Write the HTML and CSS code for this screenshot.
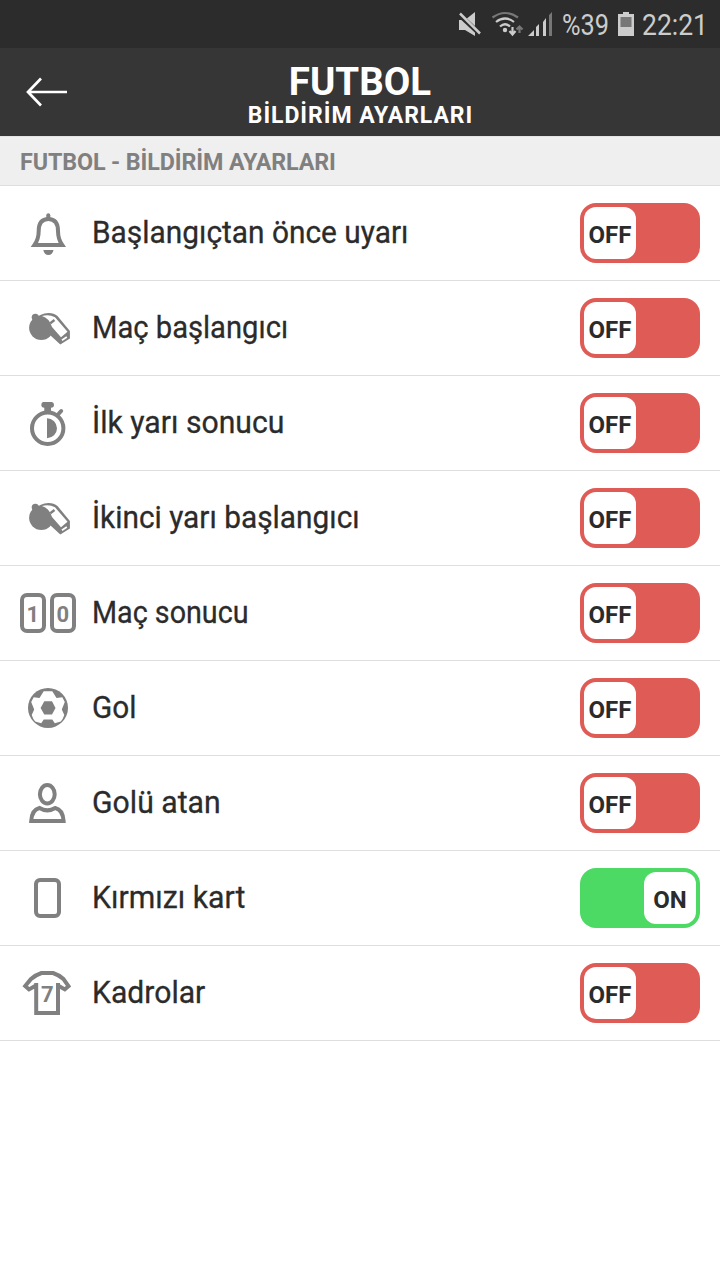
FILE: index.html
```html
<!DOCTYPE html>
<html lang="tr">
<head>
<meta charset="utf-8">
<title>Futbol - Bildirim Ayarları</title>
<link rel="stylesheet" href="styles.css">
</head>
<body>
<svg class="defs" width="0" height="0">
  <symbol id="whistle" viewBox="0 0 60 60">
    <circle cx="17.300" cy="19.300" r="3.600"/>
    <path d="M17 22Q22 15 30.500 15Q36 15 39.500 18L51.900 33V40.500L42.300 46.600L32 37L20 28Z"/>
    <circle cx="23.300" cy="29.800" r="12.200"/>
    <path class="paper" d="M24 18.100Q31 16 37 19.300L49.500 33.700L43 39.300L34 29Q31 20 24 18.100Z"/>
    <path d="M32.300 25.200L36.500 22" stroke="#808080" stroke-width="2.400"/>
    <path d="M44 42.200L48.800 39" stroke="#fff" stroke-width="1.700"/>
  </symbol>
</svg>
<header class="status">
  <svg width="260" height="48" viewBox="460 0 260 48">
    <g fill="#ccc">
      <path d="M459 20H465L475 12V36L465 30H459Z"/>
      <path d="M458.500 14L480 34" stroke="#2b2c2b" stroke-width="5"/>
      <path d="M460 13.500L480 33.500" stroke="#ccc" stroke-width="2.500"/>
      <circle cx="505" cy="30" r="2.200"/>
      <path d="M528 36L534 30V36ZM536 27L539 24V36H536ZM543 22L546 18V36H543Z"/>
      <path d="M618 14H623V12H629V14H634V36H618Z"/>
    </g>
    <g fill="none" stroke="#ccc" stroke-width="2.200">
      <path d="M496 22Q505 15 514 22M500 26.500Q505 22 510 26.500M512.500 27V34M509.500 31L512.500 34.500L515.500 31"/>
      <path stroke="#777" d="M492.500 17.500Q505 8.500 518 17.500M519.500 33V27M516.500 29.500L519.500 26.500L522.500 29.500"/>
    </g>
    <path fill="#777" d="M549 15L552 12V36H549ZM620.500 17H631.500V27H620.500Z"/>
    <text class="status-text" x="562" y="34.700" textLength="47" lengthAdjust="spacingAndGlyphs">%39</text>
    <text class="status-text" x="642" y="34.700" textLength="66" lengthAdjust="spacingAndGlyphs">22:21</text>
  </svg>
</header>
<nav class="topbar">
  <svg class="back" width="44" height="32" viewBox="0 0 44 32"><path d="M16 2.500L3 16L16 29.500M3 16H42" fill="none" stroke="#fff" stroke-width="2.700"/></svg>
  <div class="heading">
    <h1 class="title">FUTBOL</h1>
    <p class="subtitle">BİLDİRİM AYARLARI</p>
  </div>
</nav>
<h2 class="section"><span class="section-text">FUTBOL - BİLDİRİM AYARLARI</span></h2>
<main class="list">
  <div class="row">
    <svg class="icon" viewBox="0 0 60 60"><path d="M16.500 42C20 37 20.700 34 20.700 28C20.700 19.500 24 16 30.300 16C36.600 16 40 19.500 40 28C40 34 40.700 37 44.200 42Z" class="line"/><path class="line" stroke-linecap="round" d="M30.300 12.200V16"/><path d="M25.300 47H35.500Q34.500 52 30.400 52Q26.300 52 25.300 47Z"/></svg>
    <span class="label l1">Başlangıçtan önce uyarı</span><span class="toggle"><b class="knob">OFF</b></span>
  </div>
  <div class="row">
    <svg class="icon"><use href="#whistle"/></svg>
    <span class="label l2">Maç başlangıcı</span><span class="toggle"><b class="knob">OFF</b></span>
  </div>
  <div class="row">
    <svg class="icon" viewBox="0 0 60 60"><circle cx="29.700" cy="35.200" r="15.700" class="line"/><path d="M29 25.200A10 10 0 0 1 29 45.200ZM25 9H34Q36 9.500 36 12Q36 14.500 33 14.700V20H26.300V14.700Q23.300 14.500 23.300 12Q23.300 9.500 25 9Z"/><path class="line" stroke-linecap="round" d="M39.500 22L43.200 18"/></svg>
    <span class="label l3">İlk yarı sonucu</span><span class="toggle"><b class="knob">OFF</b></span>
  </div>
  <div class="row">
    <svg class="icon"><use href="#whistle"/></svg>
    <span class="label l4">İkinci yarı başlangıcı</span><span class="toggle"><b class="knob">OFF</b></span>
  </div>
  <div class="row">
    <svg class="icon" viewBox="0 0 60 60"><rect class="line" x="4" y="12" width="22" height="36" rx="5"/><rect class="line" x="34" y="12" width="22" height="36" rx="5"/><text class="digit" x="14.700" y="38.700">1</text><text class="digit" x="44.700" y="38.700">0</text></svg>
    <span class="label l5">Maç sonucu</span><span class="toggle"><b class="knob">OFF</b></span>
  </div>
  <div class="row">
    <svg class="icon" viewBox="0 0 60 60"><circle cx="30" cy="29.900" r="20"/><path class="paper" d="M25.700 13.300H34.300L38.500 20L44.300 19.300L46.800 24L43.800 31.500L46.300 37Q45 41 42.800 43.500L36.800 45.300L34.300 41.500H25.700L23.200 45.300L17.200 43.500Q15 41 13.700 37L16.200 31.500L13.200 24L15.700 19.300L21.500 20Z"/><path d="M26.300 23.200H34L37.500 29.900L34 36.600H26.300L22.600 29.900Z"/></svg>
    <span class="label l6">Gol</span><span class="toggle"><b class="knob">OFF</b></span>
  </div>
  <div class="row">
    <svg class="icon" viewBox="0 2 60 60"><ellipse class="line" cx="29.300" cy="23.200" rx="7.400" ry="9.200"/><path class="line" d="M13.200 50C13.700 41.500 17 38 21.500 37Q29.300 41.800 37.200 37C42 38 45 41.500 45.600 50Z"/></svg>
    <span class="label l7">Golü atan</span><span class="toggle"><b class="knob">OFF</b></span>
  </div>
  <div class="row">
    <svg class="icon" viewBox="0 0 60 60"><rect class="line" x="18" y="12" width="23" height="36" rx="4"/></svg>
    <span class="label l8">Kırmızı kart</span><span class="toggle on"><b class="knob">ON</b></span>
  </div>
  <div class="row">
    <svg class="icon" viewBox="0 0 60 60"><path class="line" d="M18.200 20V50H40V20M18 22.500L11 26.400L7.200 23L13 16Q17.500 12 23.500 10H35Q41 12 45.500 16L50.500 23.200L46.800 26.400L40 22.500"/><text class="digit" x="29.300" y="38.500">7</text></svg>
    <span class="label l9">Kadrolar</span><span class="toggle"><b class="knob">OFF</b></span>
  </div>
</main>
</body>
</html>
```
FILE: styles.css
```css
body { margin: 0; width: 720px; min-height: 1280px; background: #fff; color: #2b2b2b; font-family: Roboto, "Liberation Sans", sans-serif; }
.defs { display: block; height: 0; }
.status { height: 48px; background: #2b2c2b; display: flex; justify-content: flex-end; }
.status svg { overflow: visible; }
.status-text { font-size: 30px; fill: #ccc; }
.topbar { height: 88px; background: #363636; display: grid; grid-template-columns: 101px 1fr 101px; }
.back { margin: 28px 0 0 25px; }
.heading { text-align: center; color: #fff; padding-top: 14px; }
.title { margin: 0; font-size: 38.5px; line-height: 40px; font-weight: 700; }
.subtitle { margin: 0; padding: 1px 0 0 1px; font-size: 23px; line-height: 26px; font-weight: 700; letter-spacing: 0.95px; white-space: nowrap; }
.section { margin: 0; box-sizing: border-box; height: 50px; padding: 2px 0 0 20px; background: #efefef; border-top: 1px solid #e4e4e4; border-bottom: 1px solid #dedede; display: flex; align-items: center; color: #808080; font-size: 23.3px; line-height: 28px; letter-spacing: -0.12px; }
.row { box-sizing: border-box; height: 95px; padding: 0 20px 0 18px; border-bottom: 1px solid #dedede; display: flex; align-items: center; }
.icon { width: 60px; height: 60px; fill: #808080; flex: none; }
.line { fill: none; stroke: #808080; stroke-width: 4; }
.paper { fill: #fff; }
.digit { font-size: 22px; font-weight: 700; text-anchor: middle; }
.label { margin-left: 13.5px; font-size: 31px; line-height: 36px; white-space: nowrap; transform-origin: left center; -webkit-text-stroke: 0.3px #2b2b2b; }
.l1 { transform: scaleX(0.963); }
.l2 { transform: scaleX(0.94); }
.l3 { transform: scaleX(0.973); }
.l4 { transform: scaleX(0.962); }
.l5 { transform: scaleX(0.926); }
.l6 { transform: scaleX(0.96); }
.l7 { transform: scaleX(0.974); }
.l8 { transform: scaleX(0.976); }
.l9 { transform: scaleX(0.972); }
.toggle { margin-left: auto; box-sizing: border-box; width: 120px; height: 60px; padding: 4px; border-radius: 16px; background: #df5b56; display: flex; }
.on { background: #4cd964; justify-content: flex-end; }
.knob { width: 52px; height: 52px; border-radius: 12px; background: #fff; font-size: 24px; line-height: 57px; text-align: center; }
```
